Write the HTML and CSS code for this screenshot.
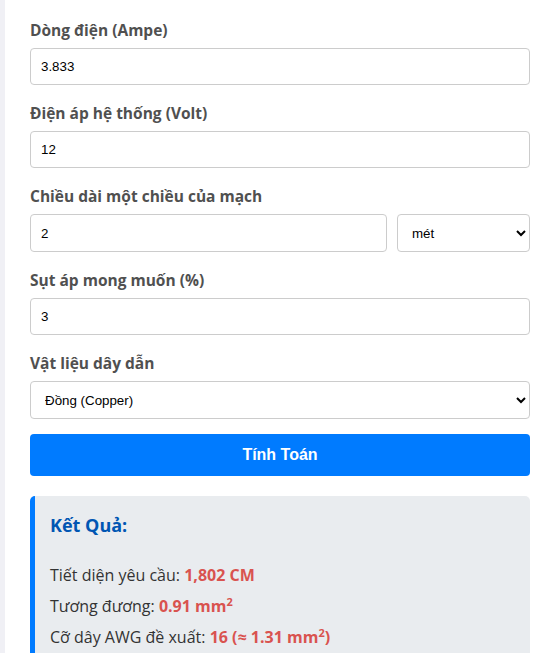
FILE: index.html
```html
<!DOCTYPE html>
<html lang="vi">
<head>
<meta charset="utf-8">
<title>Tính tiết diện dây dẫn</title>
<link rel="stylesheet" href="styles.css">
</head>
<body>
<div class="container">
  <div class="form-group">
    <label class="label" for="current">Dòng điện (Ampe)</label>
    <input class="field" id="current" type="text" value="3.833">
  </div>
  <div class="form-group">
    <label class="label" for="voltage">Điện áp hệ thống (Volt)</label>
    <input class="field" id="voltage" type="text" value="12">
  </div>
  <div class="form-group">
    <label class="label" for="length">Chiều dài một chiều của mạch</label>
    <div class="row">
      <input class="field grow" id="length" type="text" value="2">
      <select class="field unit" id="unit">
        <option>mét</option>
        <option>feet</option>
      </select>
    </div>
  </div>
  <div class="form-group">
    <label class="label" for="drop">Sụt áp mong muốn (%)</label>
    <input class="field" id="drop" type="text" value="3">
  </div>
  <div class="form-group last">
    <label class="label" for="material">Vật liệu dây dẫn</label>
    <select class="field" id="material">
      <option>Đồng (Copper)</option>
      <option>Nhôm (Aluminum)</option>
    </select>
  </div>
  <button class="btn" type="button">Tính Toán</button>
  <div class="result">
    <h3 class="result-title">Kết Quả:</h3>
    <p class="result-line">Tiết diện yêu cầu: <span class="value">1,802 CM</span></p>
    <p class="result-line">Tương đương: <span class="value">0.91 mm<sup>2</sup></span></p>
    <p class="result-line">Cỡ dây AWG đề xuất: <span class="value">16 (≈ 1.31 mm<sup>2</sup>)</span></p>
  </div>
</div>
</body>
</html>
```
FILE: styles.css
```css
html, body {
  margin: 0;
  padding: 0;
}
body {
  background: #f0f0f5;
  font-family: "Open Sans", "Noto Sans", sans-serif;
  overflow: hidden;
}
.container {
  margin-left: 5px;
  background: #ffffff;
  padding: 20px 24px 20px 25px;
  width: 500px;
  min-height: 653px;
}
.form-group {
  margin-bottom: 18px;
}
.form-group.last {
  margin-bottom: 15px;
}
.label {
  display: block;
  font-weight: 700;
  font-size: 15.5px;
  line-height: 20px;
  color: #505050;
  margin-bottom: 8px;
}
.field {
  display: block;
  box-sizing: border-box;
  width: 100%;
  padding: 10px;
  border: 1px solid #cccccc;
  border-radius: 4px;
  font-family: "Liberation Sans", Arial, sans-serif;
  font-size: 13.333px;
  color: #000000;
  background: #ffffff;
}
select.field {
  height: 38px;
  padding: 0 6px 0 10px;
}
.row {
  display: flex;
  gap: 10px;
}
.grow {
  flex: 1;
  width: auto;
  min-width: 0;
}
.unit {
  flex: 0 0 133px;
  width: 133px;
}
.btn {
  display: block;
  width: 100%;
  height: 42px;
  border: none;
  border-radius: 4px;
  background: #007bff;
  color: #ffffff;
  font-family: "Liberation Sans", Arial, sans-serif;
  font-size: 16px;
  font-weight: 700;
}
.result {
  margin-top: 20px;
  background: #e9ecef;
  border-left: 5px solid #007bff;
  border-radius: 5px;
  padding: 15px 15px 10px 15px;
  color: #333333;
}
.result-title {
  margin: 4px 0 26px;
  font-size: 18px;
  line-height: 1.2;
  font-weight: 700;
  color: #0056b3;
}
.result-line {
  margin: 7px 0;
  font-size: 16px;
  line-height: 24px;
}
.value {
  font-weight: 700;
  color: #d9534f;
}
sup {
  font-size: 11px;
  line-height: 0;
}
```
